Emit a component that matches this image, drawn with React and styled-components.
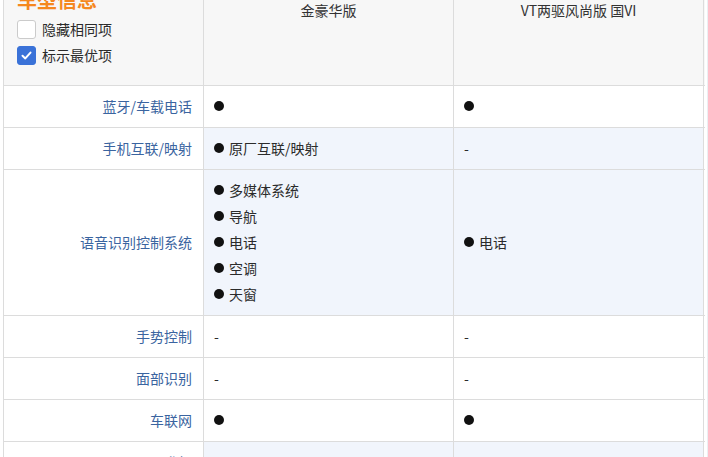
import React from "react";
import styled, { createGlobalStyle } from "styled-components";

const GlobalStyle = createGlobalStyle`
  html, body {
    margin: 0;
    padding: 0;
    background: #fff;
  }
  body {
    font-family: "Noto Sans CJK SC", "Liberation Sans", sans-serif;
    font-size: 14px;
    color: #333;
  }
`;

const Viewport = styled.div`
  width: 708px;
  height: 457px;
  overflow: hidden;
  box-sizing: border-box;
  padding-left: 3px;
  border-right: 1px solid #eceff3;
`;

const Table = styled.div`
  width: 701px;
  margin-top: -30px;
  border-left: 1px solid #dcdcdc;
  display: flex;
  flex-direction: column;
`;

const Row = styled.div`
  display: grid;
  grid-template-columns: 200px 250px 250px;
  border-bottom: 1px solid #dcdcdc;
  min-height: ${(p) => p.$height || 41}px;
`;

const HeadRow = styled(Row)`
  background: #f7f7f7;
`;

const Cell = styled.div`
  box-sizing: border-box;
  border-right: 1px solid #dcdcdc;
`;

const HeadLeft = styled(Cell)`
  padding: 17px 0 0 13px;
  display: flex;
  flex-direction: column;
`;

const Title = styled.div`
  font-size: 20px;
  line-height: 26px;
  font-weight: 700;
  color: #f5881f;
  margin-bottom: 3px;
`;

const CheckRow = styled.label`
  display: flex;
  align-items: center;
  height: 26px;
  font-size: 14px;
  color: #2b2b2b;
`;

const Box = styled.span`
  width: 19px;
  height: 19px;
  box-sizing: border-box;
  border-radius: 3px;
  margin-right: 6px;
  display: flex;
  align-items: center;
  justify-content: center;
  background: ${(p) => (p.$checked ? "#3a72d8" : "#fff")};
  border: 1px solid ${(p) => (p.$checked ? "#3a72d8" : "#cbcbcb")};
`;

const CarHead = styled(Cell)`
  padding-top: 10px;
  text-align: center;
  font-size: 14px;
  line-height: 20px;
  color: #333;
`;

const Label = styled(Cell)`
  display: flex;
  align-items: center;
  justify-content: flex-end;
  padding: 0 11px 2px 0;
  background: #fff;
  color: #3a64a0;
  font-size: 14px;
`;

const Value = styled(Cell)`
  display: flex;
  flex-direction: column;
  justify-content: center;
  padding: 0 0 2px 10px;
  background: ${(p) => (p.$alt ? "#f1f5fc" : "#fff")};
`;

const Item = styled.div`
  display: flex;
  align-items: center;
  height: 26px;
  font-size: 14px;
  color: #2b2b2b;
`;

const Dot = styled.span`
  width: 10px;
  height: 10px;
  border-radius: 50%;
  background: #111;
  margin-right: 5px;
  flex-shrink: 0;
`;

const Check = () => (
  <svg width="13" height="13" viewBox="0 0 13 13">
    <path d="M2.5 6.8 L5.3 9.4 L10.5 3.6" fill="none" stroke="#fff" strokeWidth="2" strokeLinecap="round" strokeLinejoin="round" />
  </svg>
);

const rows = [
  { label: "蓝牙/车载电话", a: [""], b: [""] },
  { label: "手机互联/映射", alt: true, a: ["原厂互联/映射"], b: null },
  { label: "语音识别控制系统", alt: true, height: 145, a: ["多媒体系统", "导航", "电话", "空调", "天窗"], b: ["电话"] },
  { label: "手势控制", a: null, b: null },
  { label: "面部识别", a: null, b: null },
  { label: "车联网", a: [""], b: [""] },
  { label: "OTA升级", alt: true, a: [""], b: [""] },
];

const Values = ({ items, alt }) => (
  <Value $alt={alt}>
    {items ? (
      items.map((t, i) => (
        <Item key={i}>
          <Dot />
          {t}
        </Item>
      ))
    ) : (
      <Item>-</Item>
    )}
  </Value>
);

export default function App() {
  return (
    <>
      <GlobalStyle />
      <Viewport>
        <Table>
          <HeadRow $height={115}>
            <HeadLeft>
              <Title>车型信息</Title>
              <CheckRow>
                <Box />
                隐藏相同项
              </CheckRow>
              <CheckRow>
                <Box $checked>
                  <Check />
                </Box>
                标示最优项
              </CheckRow>
            </HeadLeft>
            <CarHead>
              2020款 1.5T CVT智联尊享
              <br />
              金豪华版
            </CarHead>
            <CarHead>
              2019款 1.5L 手动
              <br />
              VT两驱风尚版 国VI
            </CarHead>
          </HeadRow>
          {rows.map((r) => (
            <Row key={r.label} $height={r.height}>
              <Label>{r.label}</Label>
              <Values items={r.a} alt={r.alt} />
              <Values items={r.b} alt={r.alt} />
            </Row>
          ))}
        </Table>
      </Viewport>
    </>
  );
}
